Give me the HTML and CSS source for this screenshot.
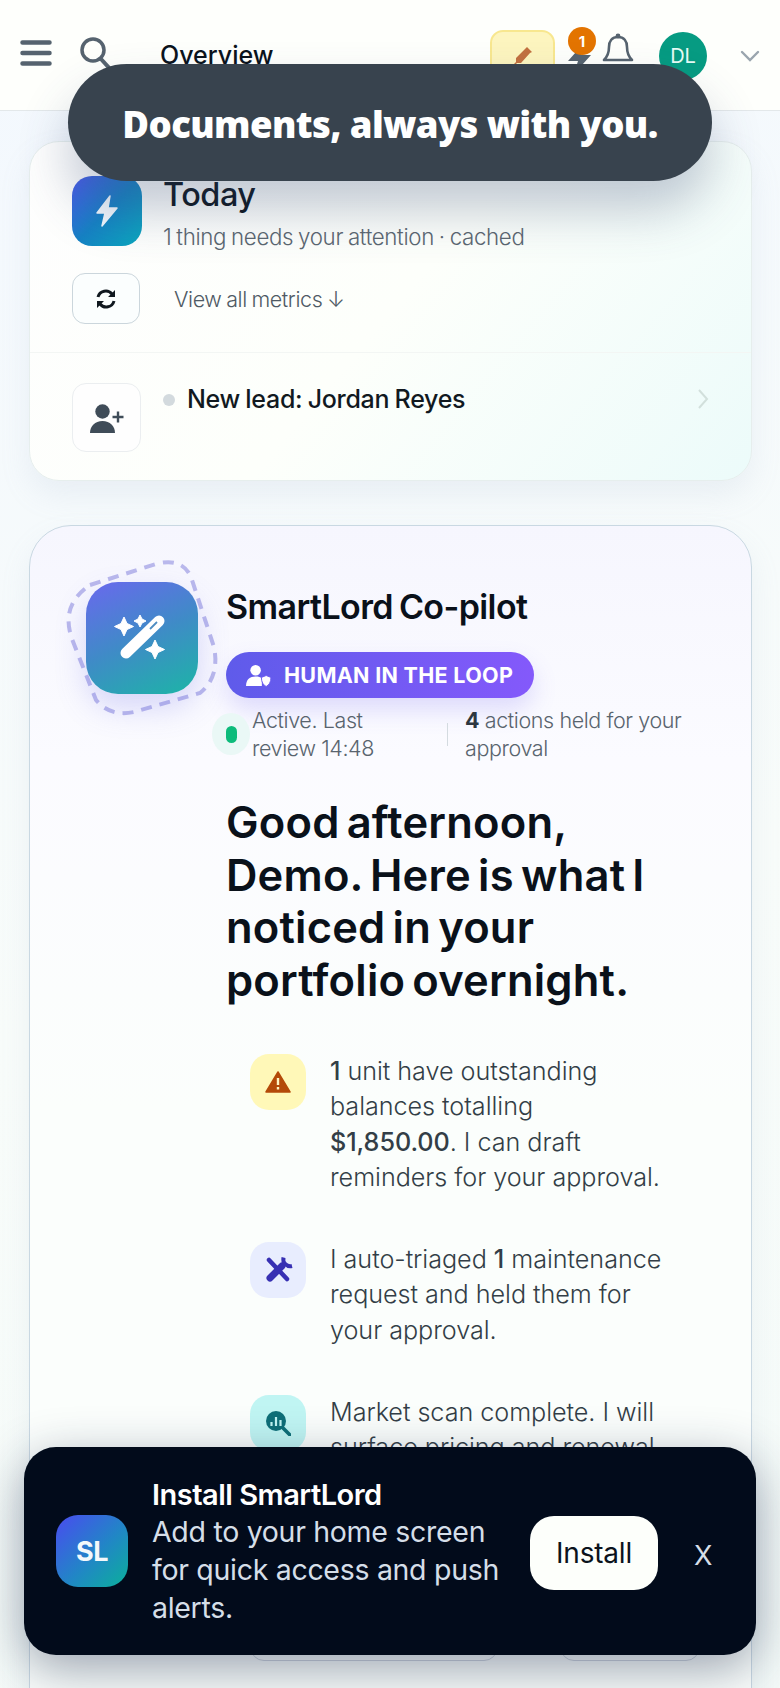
FILE: index.html
```html
<!DOCTYPE html>
<html lang="en">
<head>
<meta charset="utf-8">
<title>SmartLord Overview</title>
<link rel="stylesheet" href="styles.css">
</head>
<body>
<header class="topbar">
  <button class="tb-btn burger" aria-label="Menu"><svg viewBox="0 0 32 28" width="32" height="28"><path d="M2.500 3.500h27M2.500 14h27M2.500 24.500h27" stroke="#56636f" stroke-width="4.500" stroke-linecap="round"/></svg></button>
  <button class="tb-btn search" aria-label="Search"><svg viewBox="0 0 32 36" width="32" height="36"><circle cx="14" cy="14" r="11" fill="none" stroke="#56636f" stroke-width="3.500"/><path d="M22 23l9 10" stroke="#56636f" stroke-width="4" stroke-linecap="round"/></svg></button>
  <div class="page-title">Overview</div>
  <div class="tb-actions">
    <div class="pen-btn"><svg viewBox="0 0 24 24" width="24" height="24"><path d="M16 3l5 5-2 1-9 10H6l-2 2-1-1 2-2v-4l9-9z" fill="#c2703f"/></svg></div>
    <div class="bolt-wrap"><svg viewBox="0 0 30 34" width="30" height="34"><path d="M19 2L3 20h10l-4 13 17-19H16z" fill="#56636f"/></svg><span class="badge">1</span></div>
    <svg class="bell" viewBox="0 0 32 40" width="32" height="40"><path d="M16 5c-6 0-9 4-9 10 0 7-2 10-5 13h28c-3-3-5-6-5-13 0-6-3-10-9-10z" fill="none" stroke="#56636f" stroke-width="2.600" stroke-linejoin="round"/><circle cx="16" cy="4" r="2.400" fill="#56636f"/></svg>
    <div class="avatar">DL</div>
    <svg class="caret" viewBox="0 0 20 12" width="20" height="12"><path d="M2 2l8 8 8-8" fill="none" stroke="#9aa5ae" stroke-width="2.400" stroke-linecap="round"/></svg>
  </div>
</header>

<main class="content">
  <section class="today card">
    <div class="today-head">
      <div class="today-icon"><svg viewBox="0 0 24 32" width="24" height="32"><path d="M15 1L2 18h8L7 31l15-18h-9z" fill="#f3f8fd" stroke="#f3f8fd" stroke-width="1.500" stroke-linejoin="round"/></svg></div>
      <div class="today-text">
        <h2>Today</h2>
        <p>1 thing needs your attention · cached</p>
      </div>
    </div>
    <div class="today-tools">
      <button class="refresh" aria-label="Refresh"><svg viewBox="0 0 24 24" width="24" height="24"><path d="M4 10a8 8 0 0 1 14-3l2 2M20 14a8 8 0 0 1-14 3l-2-2" fill="none" stroke="#10181f" stroke-width="3"/><path d="M21 3v7h-7zM3 21v-7h7z" fill="#10181f"/></svg></button>
      <span class="view-all">View all metrics ↓</span>
    </div>
    <div class="lead">
      <div class="lead-icon"><svg viewBox="0 0 36 30" width="36" height="30"><circle cx="13.500" cy="7.500" r="7.200" fill="#3f4c58"/><path d="M1 29c0-7 5-12 12.500-12S26 22 26 29z" fill="#3f4c58"/><path d="M29 7.500v11M23.500 13h11" stroke="#3f4c58" stroke-width="2.400"/></svg></div>
      <span class="lead-dot"></span>
      <span class="lead-name">New lead: Jordan Reyes</span>
      <svg class="lead-chev" viewBox="0 0 12 22" width="12" height="22"><path d="M2 2l8 9-8 9" fill="none" stroke="#d2e0dc" stroke-width="2"/></svg>
    </div>
  </section>

  <section class="copilot card">
    <div class="cp-head">
      <div class="cp-icon-wrap">
        <svg class="cp-ring" viewBox="0 0 165 165" width="165" height="165"><path d="M30 30L96 9Q122 2 131 22L154 92Q160 122 140 138L74 157Q50 162 36 145L12 84Q0 50 30 30Z" fill="none" stroke="#b9b8ec" stroke-width="4" stroke-dasharray="11 8"/></svg>
        <div class="cp-icon"><svg viewBox="0 0 84 96" width="84" height="96"><path d="M26 63L59 31" stroke="#fff" stroke-width="11" stroke-linecap="round"/><path d="M50 39l7-7" stroke="#4d8cc2" stroke-width="1.800"/><path d="M24 27l3 6.500 6.500 3-6.500 3-3 6.500-3-6.500-6.500-3 6.500-3zM40 25l2 4 4 2-4 2-2 4-2-4-4-2 4-2zM55 50l3 6.500 6.500 3-6.500 3-3 6.500-3-6.500-6.500-3 6.500-3z" fill="#fff" stroke="#fff" stroke-linejoin="round"/></svg></div>
      </div>
      <div class="cp-id">
        <h2>SmartLord Co-pilot</h2>
        <div class="hitl"><svg viewBox="0 0 28 24" width="27" height="23"><circle cx="11" cy="6.500" r="5.500" fill="#fff"/><path d="M1 23c0-7 4-10 10-10 3 0 5 .7 6.500 2v8z" fill="#fff"/><path d="M22 12l5 2c0 5-2 8-5 9.500-3-1.500-5-4.500-5-9.500z" fill="#fff" stroke="#6b5cf0" stroke-width="1"/></svg><span>HUMAN IN THE LOOP</span></div>
      </div>
    </div>
    <div class="cp-status">
      <span class="status-dot"><i></i></span>
      <span class="status-a">Active. Last<br>review 14:48</span>
      <span class="status-sep"></span>
      <span class="status-b"><b>4</b> actions held for your<br>approval</span>
    </div>
    <h1 class="greeting">Good afternoon,<br>Demo. Here is what I<br>noticed in your<br>portfolio overnight.</h1>
    <ul class="notes">
      <li class="note">
        <span class="note-icon amber"><svg viewBox="0 0 26 22" width="26" height="22"><path d="M13 1l12 20H1z" fill="#b44a08" stroke="#b44a08" stroke-width="1.500" stroke-linejoin="round"/><path d="M13 7v7M13 16v2.500" stroke="#fef6c3" stroke-width="2.400"/></svg></span>
        <p><b>1</b> unit have outstanding<br>balances totalling<br><b>$1,850.00</b>. I can draft<br>reminders for your approval.</p>
      </li>
      <li class="note">
        <span class="note-icon indigo"><svg viewBox="14 16 48 48" width="48" height="48"><path d="M29 30l18 19" stroke="#3730b3" stroke-width="4.500" stroke-linecap="round"/><path d="M30 48l12-12" stroke="#3730b3" stroke-width="7" stroke-linecap="round"/><path d="M43.500 27.500a7 7 0 0 0 8.500 8.500" fill="none" stroke="#3730b3" stroke-width="4"/></svg></span>
        <p>I auto-triaged <b>1</b> maintenance<br>request and held them for<br>your approval.</p>
      </li>
      <li class="note">
        <span class="note-icon teal"><svg viewBox="0 0 26 26" width="26" height="26"><circle cx="11" cy="11" r="10" fill="#0e6f78"/><path d="M6.500 12v4M11 7v9M15.500 10v6" stroke="#c0f5f3" stroke-width="2.200"/><path d="M18 18l7 7" stroke="#0e6f78" stroke-width="3.600" stroke-linecap="round"/></svg></span>
        <p>Market scan complete. I will<br>surface pricing and renewal</p>
      </li>
    </ul>
    <div class="cp-actions">
      <span class="cp-pill cp-pill-wide"></span>
      <span class="cp-pill cp-pill-narrow"></span>
    </div>
  </section>
</main>

<div class="toast">Documents, always with you.</div>

<aside class="install">
  <div class="sl-logo">SL</div>
  <div class="install-text">
    <strong>Install SmartLord</strong>
    <span>Add to your home screen for quick access and push alerts.</span>
  </div>
  <button class="install-btn">Install</button>
  <button class="install-x">X</button>
</aside>
</body>
</html>
```

FILE: styles.css
```css
* { box-sizing: border-box; }
html, body { margin: 0; height: 1688px; overflow: hidden; }
body {
  position: relative;
  font-family: Inter, "Liberation Sans", sans-serif;
  background: linear-gradient(165deg, #f3f8fe 0%, #f8fcfa 55%, #f5fbf9 100%);
  color: #0b131c;
}
button { font: inherit; border: 0; background: none; padding: 0; }
ul { list-style: none; margin: 0; padding: 0; }
h1, h2, p { margin: 0; }

.topbar {
  height: 111px;
  display: flex;
  align-items: center;
  padding: 0 20px 0 20px;
  background: #feFffc;
  border-bottom: 1px solid #e3e8ea;
}
.tb-btn { display: flex; line-height: 0; }
.burger { margin-top: -5px; }
.search { margin-left: 27px; margin-top: -3px; }
.page-title { margin-left: 49px; font-size: 25px; font-weight: 500; color: #0b131c; }
.tb-actions { margin-left: auto; display: flex; align-items: center; position: relative; height: 50px; margin-top: 2px; }
.pen-btn {
  width: 65px; height: 52px; display: flex; align-items: center; justify-content: center;
  background: #fdf5bf; border: 2px solid #f8e78f; border-radius: 13px; margin-right: 10px;
}
.bolt-wrap { position: relative; display: flex; width: 30px; margin-top: 4px; }
.badge {
  position: absolute; left: 3px; top: -14px; width: 28px; height: 28px; border-radius: 50%;
  background: #e37400; color: #fff; font-size: 15px; font-weight: 700;
  display: flex; align-items: center; justify-content: center;
}
.bell { margin-left: 7px; margin-top: -8px; }
.avatar {
  margin-left: 25px; width: 48px; height: 48px; border-radius: 50%;
  background: #069b82; color: #e6fbf6; font-size: 20px;
  display: flex; align-items: center; justify-content: center;
}
.caret { margin-left: 33px; }

.content { padding: 30px 28px 0 29px; display: flex; flex-direction: column; gap: 44px; }
.card { border-radius: 30px; border: 1px solid #e6eeed; }

.today {
  height: 340px;
  padding: 34px 0 0;
  background: linear-gradient(130deg, #fefefe 0%, #fdfffb 50%, #ecfbfa 100%);
  box-shadow: 0 14px 30px rgba(150, 165, 190, .13);
}
.today-head { display: flex; gap: 21px; padding-left: 42px; }
.today-icon {
  width: 70px; height: 70px; border-radius: 20px; flex: none;
  background: linear-gradient(135deg, #4a58ea 0%, #1681c4 50%, #0aa8bd 100%);
  display: flex; align-items: center; justify-content: center;
}
.today-text h2 { font-size: 32.500px; font-weight: 500; letter-spacing: -.5px; line-height: 38px; }
.today-text p { margin-top: 9px; font-size: 22.300px; font-weight: 300; letter-spacing: -.35px; color: #5b6670; line-height: 28px; word-spacing: -1px; }
.today-tools { display: flex; align-items: center; gap: 34px; padding-left: 42px; margin-top: 22px; }
.refresh {
  width: 68px; height: 51px; border: 1.500px solid #cbd6dc; border-radius: 13px; background: #fbfefe;
  display: flex; align-items: center; justify-content: center;
}
.view-all { font-size: 21.500px; font-weight: 300; color: #4f5a64; letter-spacing: -.4px; word-spacing: -1px; }
.lead {
  margin-top: 28px; border-top: 1px solid #f3f6f4; padding: 30px 42px 0;
  display: flex; align-items: flex-start; height: 128px;
}
.lead-icon {
  width: 69px; height: 69px; border: 1px solid #ebeef0; border-radius: 14px; background: #fefefe;
  display: flex; align-items: center; justify-content: center; flex: none; padding-top: 2px;
}
.lead-dot { width: 12px; height: 12px; border-radius: 50%; background: #d3dade; margin: 11px 0 0 22px; flex: none; }
.lead-name { margin-left: 12px; font-size: 25px; font-weight: 500; letter-spacing: -.3px; line-height: 32px; color: #11191f; word-spacing: -1px; }
.lead-chev { margin: 5px 0 0 auto; }

.copilot {
  height: 1300px;
  position: relative;
  padding: 56px 0 0;
  border-radius: 42px;
  border: 1.500px solid #c9d8e2;
  background: linear-gradient(180deg, #f6f6fe 0%, #fbfbff 18%, #fbfefc 45%, #fbfefc 100%);
  box-shadow: 0 14px 30px rgba(150, 165, 190, .12);
}
.cp-head { display: flex; padding-left: 56px; }
.cp-icon-wrap { position: relative; width: 112px; height: 112px; flex: none; }
.cp-ring { position: absolute; left: -26px; top: -27px; }
.cp-icon {
  position: relative; width: 112px; height: 112px; border-radius: 32px;
  background: linear-gradient(155deg, #6a68ee 0%, #3f8bc7 50%, #1cb5a6 100%);
  box-shadow: 0 14px 30px rgba(110, 110, 230, .25);
  display: flex; align-items: center; justify-content: center;
}
.cp-id { margin-left: 28px; margin-top: 5px; }
.cp-id h2 { font-size: 34px; font-weight: 600; letter-spacing: -.6px; line-height: 40px; word-spacing: -2px; color: #0a111a; }
.hitl {
  margin-top: 25px; width: 308px; height: 46px; border-radius: 23px; padding-left: 19px; gap: 12px;
  display: flex; align-items: center;
  background: linear-gradient(90deg, #5f5bea, #8459fb);
  box-shadow: 0 12px 24px rgba(110, 95, 240, .2);
  color: #fff; font-size: 21.500px; font-weight: 700; letter-spacing: .3px;
}
.cp-status { display: flex; align-items: center; margin-top: 8px; padding-left: 182px; font-size: 21.500px; font-weight: 300; letter-spacing: -.4px; line-height: 28px; color: #59646e; }
.status-dot { width: 38px; height: 42px; border-radius: 50%; background: #eaf8f6; display: flex; align-items: center; justify-content: center; margin-right: 2px; flex: none; }
.status-dot i { width: 11px; height: 17px; border-radius: 6px; background: #0dbb7b; display: block; }
.status-a { width: 195px; }
.status-sep { width: 1px; height: 23px; background: #d4dbe0; margin-right: 17px; flex: none; }
.status-b { white-space: nowrap; }
.status-b b { font-weight: 700; color: #2d3740; }
.greeting { margin: 34px 0 0 196px; font-size: 43.500px; font-weight: 600; line-height: 52.500px; letter-spacing: .2px; word-spacing: -4px; color: #0a111a; }
.notes { margin: 48px 0 0 220px; width: 470px; display: flex; flex-direction: column; gap: 47px; }
.note { display: flex; gap: 24px; }
.note p { font-size: 25.200px; font-weight: 300; line-height: 35.300px; letter-spacing: -.05px; color: #333e47; white-space: nowrap; }
.note b { font-weight: 500; }
.note-icon { width: 56px; height: 56px; border-radius: 19px; flex: none; display: flex; align-items: center; justify-content: center; }
.amber { background: #fff8b8; }
.indigo { background: #e8edfe; }
.teal { background: #c0f5f3; }
.cp-actions { display: flex; gap: 62px; margin: 145px 0 0 220px; }
.cp-pill { display: block; height: 50px; border-radius: 14px; border: 1px solid #cfd5de; }
.cp-pill-wide { width: 248px; }
.cp-pill-narrow { width: 140px; }

.toast {
  position: absolute; left: 68px; top: 64px; width: 644px; height: 117px; padding-top: 3px;
  border-radius: 59px; background: #38434e;
  box-shadow: 0 30px 50px rgba(60, 80, 120, .3);
  color: #fff; font-family: "Noto Sans", sans-serif; font-size: 36.500px; font-weight: 900; letter-spacing: -.6px;
  display: flex; align-items: center; justify-content: center;
}

.install {
  position: absolute; left: 24px; top: 1447px; width: 732px; height: 208px;
  border-radius: 32px; background: #020b1b;
  box-shadow: 0 14px 50px rgba(20, 35, 70, .42);
  display: flex; align-items: center; padding-left: 32px;
}
.sl-logo {
  width: 72px; height: 72px; border-radius: 22px; flex: none;
  background: linear-gradient(135deg, #4a4bf0 0%, #2186c6 55%, #0bb09a 100%);
  color: #f3f8fb; font-size: 27px; font-weight: 700; letter-spacing: -.5px;
  display: flex; align-items: center; justify-content: center;
}
.install-text { margin-left: 24px; width: 378px; flex: none; display: flex; flex-direction: column; margin-top: 2px; }
.install-text strong { font-size: 29px; font-weight: 600; line-height: 34px; letter-spacing: -.5px; color: #fff; }
.install-text span { font-size: 28.500px; line-height: 38px; letter-spacing: -.3px; color: #d5dee8; margin-top: 1px; width: 350px; }
.install-btn {
  width: 128px; height: 74px; border-radius: 24px; background: #fdfffb; flex: none; margin-top: 4px;
  color: #0b131c; font-size: 28px; letter-spacing: -.2px; font-weight: 400;
}
.install-x { margin-left: 36px; color: #d5dee8; font-size: 27px; margin-top: 8px; }
```
